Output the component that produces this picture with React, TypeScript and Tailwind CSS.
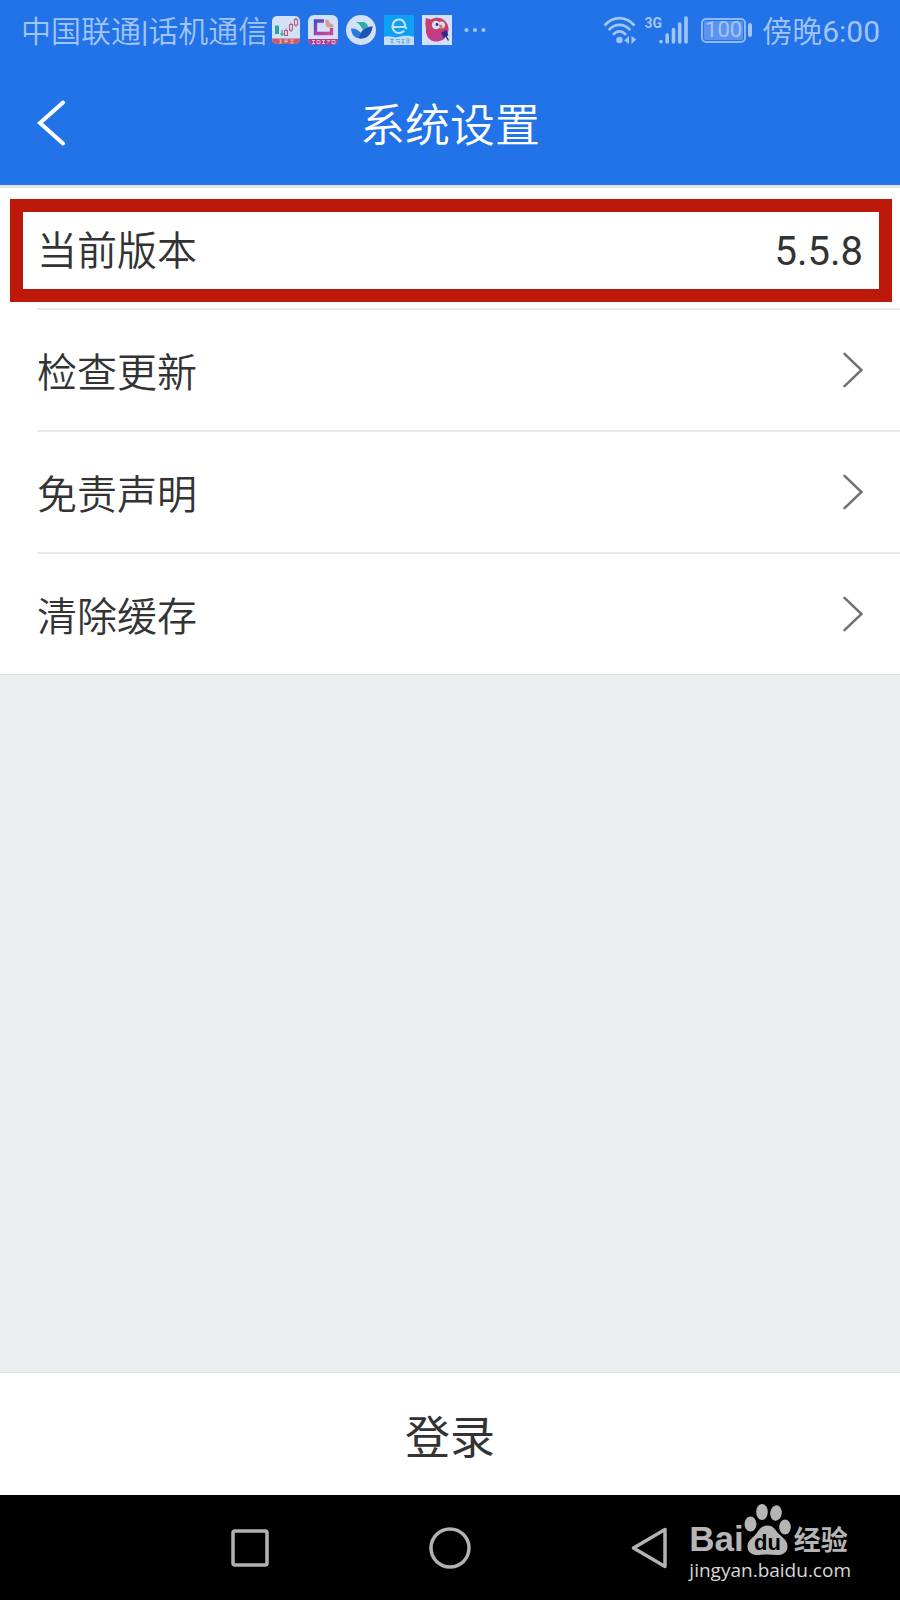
import type { ReactNode } from 'react';

const settings = ['检查更新', '免责声明', '清除缓存'];

function StockIcon() {
  return (
    <svg viewBox="0 0 28 28" className="size-7" aria-hidden="true">
      <clipPath id="stock-clip">
        <rect width="28" height="28" rx="5" />
      </clipPath>
      <g clipPath="url(#stock-clip)">
        <rect width="28" height="28" fill="#d3e1f8" />
        <path d="M0 22.500h28V28H0z" fill="#cb5a68" />
        <path d="M3 9.500h4v8.500H3z" fill="#27a5a4" />
        <path d="M10 14v6M8 18h4" stroke="#27a5a4" strokeWidth="1.200" />
        <path
          d="M12.500 14.500h3v5h-3zM14 12.500v2M17.500 8.500h3v5.500h-3zM19 6.500v2M19 14v2M22.500 3.500h3v5.500h-3zM24 1.500v2M24 9v2"
          fill="none"
          stroke="#bb5a76"
          strokeWidth="1.100"
        />
        <path d="M7 24h3M8.500 24v3M7 27h3M12 24h4M12 25.500h4M14 24v3M18 24h4M18 27h4M20 24v3" stroke="#e6bccb" strokeWidth=".8" />
      </g>
    </svg>
  );
}

function FrameIcon() {
  return (
    <svg viewBox="0 0 30 30" className="size-[30px]" aria-hidden="true">
      <defs>
        <linearGradient id="frame" x1="0" y1="0" x2="1" y2="1">
          <stop offset="0" stopColor="#4c49c9" />
          <stop offset=".5" stopColor="#a43fae" />
          <stop offset="1" stopColor="#cf4b88" />
        </linearGradient>
        <clipPath id="frame-clip">
          <rect width="30" height="30" rx="6" />
        </clipPath>
      </defs>
      <g clipPath="url(#frame-clip)">
        <rect width="30" height="30" fill="#d3e1f8" />
        <path d="M0 24h30v6H0z" fill="#b23c8e" />
        <path d="M16 6H7.500v12.500h16V13" fill="none" stroke="url(#frame)" strokeWidth="3.400" />
        <path d="M17.500 4.500c3 0 4 1 4 4 3 0 4 1.500 4 4h-4c-3 0-4-1.500-4-4z" fill="#d59a8d" />
        <path d="M4 25.500h3M5.500 25v4M4 28.500h3M9 25.500h3v3H9zM14 25.500h3M14 28.500h3M15.500 25v4M19 25.500h3M19 28.500l3-3M24 25.500h3v3h-3z" fill="none" stroke="#e5c3e2" strokeWidth=".9" />
      </g>
    </svg>
  );
}

function BirdIcon() {
  return (
    <svg viewBox="0 0 30 30" className="size-[30px]" aria-hidden="true">
      <circle cx="15" cy="15" r="15" fill="#d3e1f8" />
      <path d="M10 7h7c2.500 0 4 1.500 5 4.500l-5.500 3c-1.500-3.500-3.500-6-6.500-7.500z" fill="#2aae9f" />
      <path d="M5 13.500c4-.5 7.500 1.500 10 4.500 1-3.500 5-6.500 11.500-6.500-1 7.500-5 12-12 12C9 23.500 5.500 20 5 13.500z" fill="#2b79e3" />
      <path d="M26.500 11.500c-1 7.500-5 12-12 12l-1.500-.2c1.500-6.300 5.500-11.800 13.500-11.800z" fill="#1d55b2" />
    </svg>
  );
}

function CloudIcon() {
  return (
    <svg viewBox="0 0 30 30" className="size-[30px]" aria-hidden="true">
      <path d="M0 0h30v30H0z" fill="#0ea0f3" />
      <path d="M0 22c5-2 9 1 14 0s10-2 16 0v8H0z" fill="#c4dcf8" />
      <path d="M9.500 12h10c1.500 0 2-1 1.500-2.500C20 6 17.500 4.500 15 4.500c-4 0-6.500 3.200-6.500 7s3 6.500 6.500 6.500c2 0 3.500-.7 4.500-1.700" fill="none" stroke="#c8e2fb" strokeWidth="2.200" strokeLinecap="round" />
      <circle cx="22" cy="13" r="1.200" fill="#c8e2fb" />
      <path d="M6 24.500h4M8 23.500v5M6.500 27h3M12 24.500h4M12.500 26.500h3v2M17.500 24.500h3M19 24v5M17.500 27.500h3M22 24h3v4h-3M22 26h3" fill="none" stroke="#5b9ed9" strokeWidth=".8" />
    </svg>
  );
}

function ParrotIcon() {
  return (
    <svg viewBox="0 0 30 30" className="size-[30px]" aria-hidden="true">
      <defs>
        <linearGradient id="parrot" x1="0" y1="0" x2="0" y2="1">
          <stop offset="0" stopColor="#cf3f60" />
          <stop offset="1" stopColor="#bd3a91" />
        </linearGradient>
      </defs>
      <path d="M0 0h30v30H0z" fill="#d3e1f8" />
      <path d="M4 3l5 1.500c4-2.500 11-2.500 14.500 2 3.500 4 4 9 1.500 13-2 5-6 7-11 7C7 26.500 3 20 4 13c-.7-3-1-6 0-10z" fill="url(#parrot)" />
      <circle cx="14" cy="10" r="4.200" fill="#d3e1f8" />
      <circle cx="19.500" cy="10" r="3.500" fill="#d3e1f8" />
      <circle cx="15" cy="9.500" r="1.400" fill="#3b2b6b" />
      <path d="M17 10c3-1 4.500 1 3 4-2-.5-3-2-3-4z" fill="#d3793d" />
      <path d="M20 18l4-2 1.500 4-3.500 2zM24 21l2.500 4.500" fill="#2e2d8c" stroke="#2e2d8c" strokeWidth="1.400" />
    </svg>
  );
}

function MoreIcon() {
  return (
    <svg viewBox="0 0 22 6" className="ml-1 h-[6px] w-[22px]" fill="currentColor" aria-hidden="true">
      <circle cx="2.500" cy="3" r="2.100" />
      <circle cx="11" cy="3" r="2.100" />
      <circle cx="19.500" cy="3" r="2.100" />
    </svg>
  );
}

function WifiIcon() {
  return (
    <svg viewBox="0 0 34 28" className="h-7 w-[34px]" aria-hidden="true">
      <g fill="none" stroke="currentColor" strokeWidth="2.700">
        <path d="M1.500 9.500C10-.3 23-.3 31.500 9.500" />
        <path d="M5.700 14.200c6-7 15.600-7 21.600 0" />
        <path d="M10 18.800c4-4.500 9-4.500 13 0" />
      </g>
      <circle cx="16.500" cy="24" r="3.200" fill="currentColor" />
      <path d="M26 20v8l-4.800-3.500zM28.500 20v8l4.800-4.500z" fill="currentColor" />
    </svg>
  );
}

function SignalIcon() {
  return (
    <svg viewBox="0 0 29 28" className="-ml-[3px] h-7 w-[29px]" stroke="currentColor" strokeWidth="3.600" strokeLinecap="round" aria-hidden="true">
      <path d="M2 25.500v.2M8.200 19v7M14.500 13.500V26M20.700 8v18M27 2v24" />
    </svg>
  );
}

function Battery() {
  return (
    <div className="ml-[13px] flex items-center gap-[2px]">
      <div className="h-[25px] w-[45px] rounded-[5px] border-2 border-[#91b8f3] p-px">
        <div className="flex h-full items-center justify-center rounded-[2px] bg-[#5a94f0] text-[22px] leading-none">100</div>
      </div>
      <span className="h-[14px] w-[4px] rounded-full bg-current" />
    </div>
  );
}

function StatusBar() {
  return (
    <div className="flex h-[60px] items-center justify-between pr-5 pl-[21px] text-[30px] leading-none text-[#a2c5f8]">
      <div className="flex items-center gap-1">
        <span className="pt-1 font-[350] whitespace-nowrap">
          中国联通<span className="font-normal">|</span>话机通信
        </span>
        <div className="flex items-center gap-2">
          <StockIcon />
          <FrameIcon />
          <BirdIcon />
          <CloudIcon />
          <ParrotIcon />
          <MoreIcon />
        </div>
      </div>
      <div className="flex items-center">
        <WifiIcon />
        <span className="ml-2 h-7 text-[14px] leading-none font-bold">3G</span>
        <SignalIcon />
        <Battery />
        <span className="ml-[10px] pt-1 font-[350] whitespace-nowrap">
          傍晚<span className="font-normal">6:00</span>
        </span>
      </div>
    </div>
  );
}

function Chevron() {
  return (
    <svg viewBox="0 0 20 36" className="h-9 w-5" fill="none" stroke="#707070" strokeWidth="2.500" strokeLinecap="round" aria-hidden="true">
      <path d="M1.500 1.800 18.500 18 1.500 34.200" />
    </svg>
  );
}

function NavButton({ label, children }: { label: string; children: ReactNode }) {
  return (
    <button type="button" aria-label={label} className="flex h-full w-[200px] items-center justify-center">
      <svg viewBox="0 0 44 44" className="size-11" fill="none" stroke="#b2b2b2" strokeWidth="3.500" strokeLinejoin="round">
        {children}
      </svg>
    </button>
  );
}

function BaiduMark() {
  return (
    <div className="absolute top-[9px] right-[49px] text-[#b5b5b5]">
      <div className="flex h-[52px] items-end">
        <span className="font-['Liberation_Sans'] text-[35px] leading-[34px] font-bold">Bai</span>
        <svg viewBox="0 0 48 52" className="h-[52px] w-12" fill="currentColor" aria-hidden="true">
          <ellipse cx="6.500" cy="20" rx="6" ry="7.500" />
          <ellipse cx="18" cy="8" rx="5.800" ry="8" />
          <ellipse cx="32" cy="9" rx="5.800" ry="7.700" transform="rotate(8 32 9)" />
          <ellipse cx="41" cy="23" rx="5.800" ry="7.500" />
          <path d="M23.500 21.500c6 0 8 5 11.500 8.500 4 4 8.500 6.500 8.500 12.500s-5 9-11 8.500c-6-.8-12-.8-18 0-6 .5-11-2.500-11-8.500s5-8.500 8.500-12.500c3-4 5.500-8.500 11.500-8.500z" />
          <text x="23.500" y="46" textAnchor="middle" className="fill-black font-['Liberation_Sans'] text-[22px] font-bold">du</text>
        </svg>
        <span className="ml-[2px] text-[27px] leading-[29px] font-bold">经验</span>
      </div>
      <div className="pt-px font-['Open_Sans'] text-[19px] leading-[26px] text-[#d8d8d8]">jingyan.baidu.com</div>
    </div>
  );
}

function App() {
  return (
    <div className="flex min-h-screen flex-col bg-[#edeef0] font-[Roboto,'Noto_Sans_CJK_SC',sans-serif] text-[#333333]">
      <header className="border-b-3 border-[#e4e5ea] bg-[#2272e8] text-white">
        <StatusBar />
        <div className="relative flex h-[125px] items-center justify-center">
          <button type="button" aria-label="返回" className="absolute left-9">
            <svg viewBox="0 0 30 46" className="h-[46px] w-[30px]" fill="none" stroke="currentColor" strokeWidth="4" strokeLinecap="round">
              <path d="M27 2.500 4 23l23 20.500" />
            </svg>
          </button>
          <h1 className="pt-2 text-[45px] leading-none font-[350]">系统设置</h1>
        </div>
      </header>

      <main className="flex-1">
        <div className="relative border-b border-[#e2e3e5] bg-white pl-[37px] text-[40px] font-[350]">
          <ul className="divide-y-2 divide-[#e9e9ea]">
            <li className="flex h-[122px] items-center justify-between pr-[37px]">
              <span className="pt-2">当前版本</span>
              <span className="pt-2 font-normal">5.5.8</span>
            </li>
            {settings.map(name => (
              <li key={name} className="h-[122px] last:h-[120px]">
                <button type="button" className="flex h-full w-full items-center justify-between pr-[37px]">
                  <span className="pt-2">{name}</span>
                  <Chevron />
                </button>
              </li>
            ))}
          </ul>
          <div className="pointer-events-none absolute top-[11px] right-[8px] left-[10px] h-[103px] border-[13px] border-[#bc190b]" />
        </div>
      </main>

      <button type="button" className="h-[123px] border-t border-[#e2e3e5] bg-white pt-2 text-[45px] leading-none">
        登录
      </button>

      <nav className="relative flex h-[105px] items-center justify-center bg-black">
        <NavButton label="最近任务">
          <rect x="5" y="5" width="34" height="34" rx="2" />
        </NavButton>
        <NavButton label="主屏幕">
          <circle cx="22" cy="22" r="19" />
        </NavButton>
        <NavButton label="返回">
          <path d="M5.500 22 37 3.500v37z" />
        </NavButton>
        <BaiduMark />
      </nav>
    </div>
  );
}

export default App;
